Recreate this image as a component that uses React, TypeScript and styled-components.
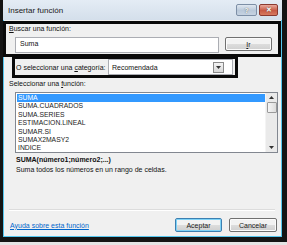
import React from 'react';
import styled, { createGlobalStyle } from 'styled-components';

const GlobalStyle = createGlobalStyle`
  html, body {
    margin: 0;
    padding: 0;
    background: #ffffff;
  }
  body {
    font-family: "Liberation Sans", Arial, sans-serif;
    font-size: 7px;
    color: #111111;
  }
`;

const functions = [
  'SUMA',
  'SUMA.CUADRADOS',
  'SUMA.SERIES',
  'ESTIMACION.LINEAL',
  'SUMAR.SI',
  'SUMAX2MASY2',
  'INDICE',
];

const Stage = styled.div`
  position: relative;
  width: 287px;
  height: 245px;
  overflow: hidden;
  background: #e4e4e4;
`;

const Window = styled.div`
  width: 279px;
  border-left: 3px solid #141414;
  border-right: 5px solid #141414;
  border-bottom: 5px solid #141414;
  background: #d9e3ee;
`;

const TitleBar = styled.div`
  height: 20px;
  display: flex;
  align-items: center;
  padding: 0 4px 0 5px;
  background: linear-gradient(#e4ecf5, #d4dfeb);
`;

const Title = styled.span`
  flex: 1;
  font-size: 8px;
  color: #1a1a1a;
`;

const CaptionButton = styled.div<{ $close?: boolean }>`
  width: ${(p) => (p.$close ? 17 : 19)}px;
  height: 10px;
  margin-left: 2px;
  border: 1px solid ${(p) => (p.$close ? '#8a3a30' : '#7d8fa6')};
  border-radius: 2px;
  display: flex;
  align-items: center;
  justify-content: center;
  font-size: 7px;
  font-weight: bold;
  color: #ffffff;
  background: ${(p) =>
    p.$close
      ? 'linear-gradient(#e9a99c, #c75a45 55%, #d77a60)'
      : 'linear-gradient(#dfe7f0, #b9c8d9 55%, #c6d3e2)'};
  text-shadow: 0 0 1px #333;
`;

const Content = styled.div`
  height: 216px;
  display: flex;
  flex-direction: column;
  padding: 0 4px 0 5px;
  background: #f0f0f0;
  border: 1px solid #55c6ee;
  border-top: none;
`;

const Label = styled.div<{ $top: number; $left?: number }>`
  height: 10px;
  line-height: 10px;
  margin-top: ${(p) => p.$top}px;
  margin-left: ${(p) => p.$left ?? 0}px;
  white-space: nowrap;
`;

const Key = styled.span`
  text-decoration: underline;
`;

const SearchRow = styled.div`
  display: flex;
  align-items: flex-start;
  gap: 6px;
  margin-top: 3px;
  margin-left: 6px;
`;

const TextField = styled.div`
  width: 198px;
  height: 14px;
  padding-left: 4px;
  border: 1px solid #abadb3;
  background: #ffffff;
  line-height: 12px;
`;

const PushButton = styled.div<{ $width: number; $focused?: boolean }>`
  width: ${(p) => p.$width}px;
  height: 12px;
  border: 1px solid ${(p) => (p.$focused ? '#3c7fb1' : '#707070')};
  border-radius: 2px;
  box-shadow: inset 0 0 0 1px ${(p) => (p.$focused ? '#7fd3f7' : '#fbfbfb')};
  background: linear-gradient(#f2f2f2 50%, #dddddd 50%, #cfcfcf);
  display: flex;
  align-items: center;
  justify-content: center;
  color: #1a1a1a;
`;

const CategoryRow = styled.div`
  display: flex;
  align-items: center;
  margin-top: 6px;
  margin-left: 7px;
`;

const CategoryLabel = styled.div`
  width: 92px;
  white-space: nowrap;
`;

const Select = styled.div`
  width: 120px;
  height: 14px;
  display: flex;
  align-items: center;
  padding-left: 3px;
  border: 1px solid #abadb3;
  background: #ffffff;
`;

const SelectValue = styled.span`
  flex: 1;
`;

const DropButton = styled.div`
  width: 9px;
  height: 9px;
  margin-right: 8px;
  border: 1px solid #8a8a8a;
  background: linear-gradient(#f4f4f4, #d8d8d8);
  display: flex;
  align-items: center;
  justify-content: center;
`;

const ListBox = styled.div`
  display: flex;
  width: 261px;
  height: 59px;
  margin-top: 3px;
  margin-left: 6px;
  border: 1px solid #828790;
  background: #ffffff;
`;

const Items = styled.ul`
  flex: 1;
  margin: 0;
  padding: 1px 0 0 1px;
  list-style: none;
`;

const Item = styled.li<{ $selected?: boolean }>`
  height: 8.4px;
  line-height: 8.4px;
  padding-left: 1px;
  font-size: 6.8px;
  color: ${(p) => (p.$selected ? '#ffffff' : '#1a1a1a')};
  background: ${(p) => (p.$selected ? '#3399ff' : 'transparent')};
`;

const ScrollBar = styled.div`
  width: 11px;
  display: flex;
  flex-direction: column;
  align-items: center;
  background: #eaeaea;
  border-left: 1px solid #f4f4f4;
`;

const ScrollArrow = styled.div`
  height: 9px;
  display: flex;
  align-items: center;
  justify-content: center;
`;

const Thumb = styled.div`
  width: 8px;
  height: 9px;
  border: 1px solid #9a9a9a;
  border-radius: 1px;
  background: linear-gradient(90deg, #f6f6f6, #dcdcdc);
`;

const Track = styled.div`
  flex: 1;
`;

const Syntax = styled.div`
  height: 10px;
  line-height: 10px;
  margin-top: 2px;
  margin-left: 7px;
  font-weight: bold;
  color: #111111;
`;

const Description = styled.div`
  height: 10px;
  line-height: 10px;
  margin-left: 7px;
`;

const Spacer = styled.div`
  flex: 1;
`;

const Separator = styled.div`
  height: 1px;
  margin-right: 2px;
  background: #dcdcdc;
  border-bottom: 1px solid #ffffff;
`;

const Footer = styled.div`
  display: flex;
  align-items: center;
  gap: 7px;
  height: 14px;
  margin-top: 7px;
  margin-bottom: 4px;
`;

const HelpLink = styled.a`
  flex: 1;
  margin-left: 1px;
  color: #0066cc;
  text-decoration: underline;
  white-space: nowrap;
`;

const Highlight = styled.div<{ $x: number; $y: number; $w: number; $h: number }>`
  position: absolute;
  left: ${(p) => p.$x}px;
  top: ${(p) => p.$y}px;
  width: ${(p) => p.$w}px;
  height: ${(p) => p.$h}px;
  box-sizing: border-box;
  border: 3px solid #0a0a0a;
  pointer-events: none;
`;

const Arrow = ({ up }: { up?: boolean }) => (
  <svg width="5" height="3" viewBox="0 0 5 3">
    <path d={up ? 'M0 3 L2.5 0 L5 3 Z' : 'M0 0 L5 0 L2.5 3 Z'} fill="#333" />
  </svg>
);

const App: React.FC = () => {
  return (
    <>
      <GlobalStyle />
      <Stage>
        <Window>
          <TitleBar>
            <Title>Insertar función</Title>
            <CaptionButton>?</CaptionButton>
            <CaptionButton $close>✕</CaptionButton>
          </TitleBar>
          <Content>
            <Label $top={4}>
              <Key>B</Key>uscar una función:
            </Label>
            <SearchRow>
              <TextField>Suma</TextField>
              <PushButton $width={45}>
                <Key>I</Key>r
              </PushButton>
            </SearchRow>
            <CategoryRow>
              <CategoryLabel>
                O seleccionar una <Key>c</Key>ategoría:
              </CategoryLabel>
              <Select>
                <SelectValue>Recomendada</SelectValue>
                <DropButton>
                  <Arrow />
                </DropButton>
              </Select>
            </CategoryRow>
            <Label $top={4}>
              Seleccionar una <Key>f</Key>unción:
            </Label>
            <ListBox>
              <Items>
                {functions.map((name, i) => (
                  <Item key={name} $selected={i === 0}>
                    {name}
                  </Item>
                ))}
              </Items>
              <ScrollBar>
                <ScrollArrow>
                  <Arrow up />
                </ScrollArrow>
                <Thumb />
                <Track />
                <ScrollArrow>
                  <Arrow />
                </ScrollArrow>
              </ScrollBar>
            </ListBox>
            <Syntax>SUMA(número1;número2;...)</Syntax>
            <Description>Suma todos los números en un rango de celdas.</Description>
            <Spacer />
            <Separator />
            <Footer>
              <HelpLink href="#">Ayuda sobre esta función</HelpLink>
              <PushButton $width={45} $focused>
                Aceptar
              </PushButton>
              <PushButton $width={46}>Cancelar</PushButton>
            </Footer>
          </Content>
        </Window>
        <Highlight $x={3} $y={21} $w={278} $h={36} />
        <Highlight $x={12} $y={56} $w={226} $h={22} />
      </Stage>
    </>
  );
};

export default App;
